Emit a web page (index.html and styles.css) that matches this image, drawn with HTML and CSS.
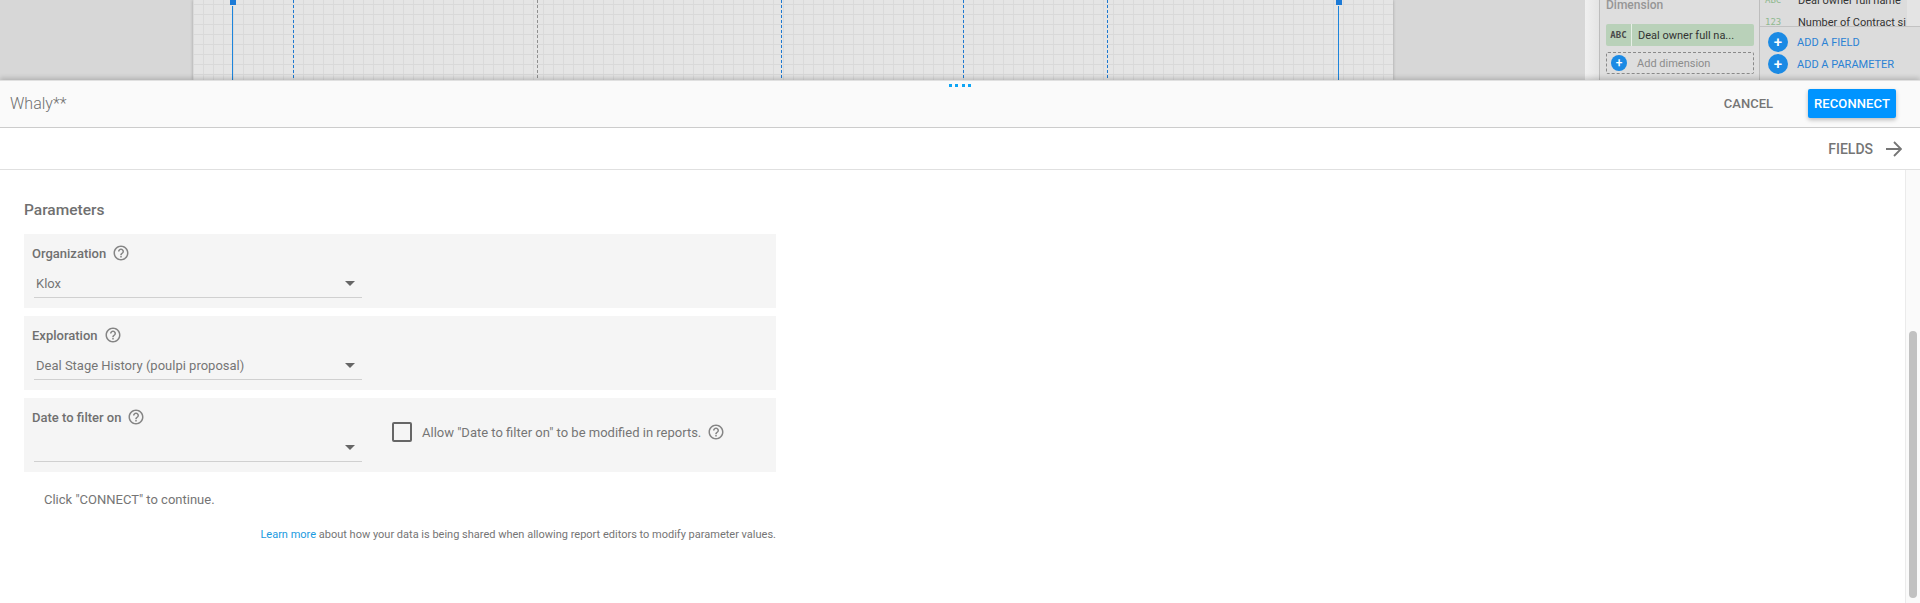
FILE: index.html
```html
<!DOCTYPE html>
<html lang="en">
<head>
    <meta charset="UTF-8">
    <meta name="viewport" content="width=device-width, initial-scale=1.0">
    <title>Whaly**</title>
    <link rel="stylesheet" href="styles.css">
</head>
<body>

<svg class="defs" width="0" height="0">
    <symbol id="help" viewBox="0 0 24 24">
        <path d="M11 18h2v-2h-2v2zm1-16C6.48 2 2 6.48 2 12s4.48 10 10 10 10-4.48 10-10S17.52 2 12 2zm0 18c-4.41 0-8-3.59-8-8s3.59-8 8-8 8 3.59 8 8-3.59 8-8 8zm0-14c-2.21 0-4 1.79-4 4h2c0-1.1.9-2 2-2s2 .9 2 2c0 2-3 1.75-3 5h2c0-2.25 3-2.5 3-5 0-2.21-1.79-4-4-4z"/>
    </symbol>
</svg>

<div class="backdrop">
    <div class="gutter-left"></div>
    <div class="canvas">
        <span class="guide guide-solid guide-a"></span>
        <span class="guide guide-dash guide-b"></span>
        <span class="guide guide-grey guide-c"></span>
        <span class="guide guide-dash guide-d"></span>
        <span class="guide guide-dash guide-e"></span>
        <span class="guide guide-dash guide-f"></span>
        <span class="guide guide-solid guide-g"></span>
    </div>
    <div class="gutter-right"></div>
    <div class="gap"></div>
    <div class="data-col">
        <div class="dim-label">Dimension</div>
        <div class="chip">
            <span class="chip-type">ABC</span>
            <span class="chip-name">Deal owner full na...</span>
        </div>
        <div class="add-dim">
            <span class="plus plus-small">+</span>
            <span class="add-dim-text">Add dimension</span>
        </div>
    </div>
    <div class="fields-col">
        <div class="fields-list">
            <div class="field-row"><span class="field-type">ABC</span>Deal owner full name</div>
            <div class="field-row"><span class="field-type">123</span>Number of Contract si</div>
        </div>
        <div class="add-row"><span class="plus">+</span>ADD A FIELD</div>
        <div class="add-row"><span class="plus">+</span>ADD A PARAMETER</div>
    </div>
</div>

<div class="panel">
    <div class="dots"><i></i><i></i><i></i><i></i></div>
    <header class="header">
        <div class="title">Whaly**</div>
        <button class="btn-cancel">CANCEL</button>
        <button class="btn-reconnect">RECONNECT</button>
    </header>
    <div class="toolbar">
        <span class="fields-link">FIELDS</span>
        <svg class="arrow" width="16" height="16" viewBox="0 0 16 16">
            <path d="M0 8h15M8 1l7 7-7 7"/>
        </svg>
    </div>
    <div class="content">
        <div class="form">
            <h2 class="form-title">Parameters</h2>

            <section class="card">
                <div class="card-main">
                    <div class="card-label">Organization <svg class="help"><use href="#help"/></svg></div>
                    <div class="select"><span>Klox</span><i class="caret"></i></div>
                </div>
            </section>

            <section class="card">
                <div class="card-main">
                    <div class="card-label">Exploration <svg class="help"><use href="#help"/></svg></div>
                    <div class="select"><span>Deal Stage History (poulpi proposal)</span><i class="caret"></i></div>
                </div>
            </section>

            <section class="card">
                <div class="card-main">
                    <div class="card-label">Date to filter on <svg class="help"><use href="#help"/></svg></div>
                    <div class="select"><span></span><i class="caret"></i></div>
                </div>
                <label class="allow">
                    <span class="checkbox"></span>
                    <span>Allow "Date to filter on" to be modified in reports.</span>
                    <svg class="help"><use href="#help"/></svg>
                </label>
            </section>

            <p class="hint">Click "CONNECT" to continue.</p>
            <p class="note"><a href="#">Learn more</a> about how your data is being shared when allowing report editors to modify parameter values.</p>
        </div>
        <div class="scrollbar"><div class="thumb"></div></div>
    </div>
</div>

</body>
</html>
```

FILE: styles.css
```css
* {
    box-sizing: border-box;
}
body {
    margin: 0;
    height: 603px;
    overflow: hidden;
    display: flex;
    flex-direction: column;
    background: #fff;
    font-family: Roboto, sans-serif;
    color: #757575;
}
.defs {
    position: absolute;
}

/* dimmed report editor behind the panel */
.backdrop {
    height: 80px;
    flex: none;
    display: flex;
    overflow: hidden;
    background: #d7d7d7;
}
.gutter-left {
    width: 193px;
}
.canvas {
    width: 1200px;
    position: relative;
    background-color: #e5e5e5;
    background-image:
        linear-gradient(#d9d9d9 1px, transparent 1px),
        linear-gradient(90deg, #dadada 1px, transparent 1px);
    background-size: 10px 10px;
    background-position: 0 4px;
    box-shadow: 0 0 3px rgba(0, 0, 0, 0.25);
}
.guide {
    position: absolute;
    top: 0;
    bottom: 0;
    width: 1px;
}
.guide-solid {
    background: #1c84dc;
}
.guide-solid::before {
    content: "";
    position: absolute;
    left: -2px;
    top: 0;
    width: 6px;
    height: 5px;
    background: #1c7ad6;
    box-shadow: 0 1px 0 #e5e5e5;
}
.guide-dash {
    background: repeating-linear-gradient(#1c78d0 0 3px, transparent 3px 5px);
}
.guide-grey {
    background: repeating-linear-gradient(#8f8f8f 0 3px, transparent 3px 5px);
}
.guide-a { left: 39px; }
.guide-b { left: 100px; }
.guide-c { left: 344px; }
.guide-d { left: 588px; }
.guide-e { left: 770px; }
.guide-f { left: 914px; }
.guide-g { left: 1145px; }
.gutter-right {
    width: 192px;
}
.gap {
    width: 14px;
    background: linear-gradient(90deg, #f0f0f0, #e4e4e4);
}
.data-col {
    width: 161px;
    padding: 0 5px 0 6px;
    background: #dedede;
    border-left: 1px solid #bdbdbd;
    border-right: 1px solid #bdbdbd;
}
.dim-label {
    height: 10px;
    line-height: 10px;
    font-size: 12px;
    font-weight: 500;
    color: #969696;
}
.chip {
    margin-top: 14px;
    height: 22px;
    display: flex;
    align-items: center;
    background: #b9d1b9;
    border-radius: 2px;
    font-size: 11px;
    color: #333;
}
.chip-type {
    width: 26px;
    height: 22px;
    line-height: 22px;
    text-align: center;
    border-right: 1px solid #e6efe6;
    font-family: "DejaVu Sans Mono", monospace;
    font-size: 9px;
    font-weight: bold;
    color: #4a4a4a;
}
.chip-name {
    margin-left: 6px;
}
.add-dim {
    margin-top: 6px;
    height: 22px;
    display: flex;
    align-items: center;
    padding-left: 4px;
    border: 1px dashed #8a8a8a;
    border-radius: 2px;
    font-size: 11px;
    color: #8c8c8c;
}
.add-dim-text {
    margin-left: 10px;
}
.plus {
    flex: none;
    width: 20px;
    height: 20px;
    margin-right: 9px;
    border-radius: 50%;
    background: #1b8ae4;
    color: #fff;
    font-size: 15px;
    font-weight: 500;
    line-height: 20px;
    text-align: center;
}
.plus.plus-small {
    width: 16px;
    height: 16px;
    margin: 0;
    font-size: 12px;
    line-height: 16px;
}
.fields-col {
    flex: 1;
    background: #dcdcdc;
}
.fields-list {
    height: 27px;
    overflow: hidden;
    border-bottom: 1px solid #c2c2c2;
    background: linear-gradient(90deg, transparent 147px, #e4e4e4 147px);
}
.field-row {
    height: 22px;
    display: flex;
    align-items: center;
    font-size: 11px;
    color: #333;
    white-space: nowrap;
    width: 147px;
    overflow: hidden;
}
.field-row:first-child {
    margin-top: -11px;
}
.field-type {
    flex: none;
    width: 38px;
    padding-left: 5px;
    font-family: "DejaVu Sans Mono", monospace;
    font-size: 9px;
    color: #8fb98f;
}
.add-row {
    height: 22px;
    padding-left: 8px;
    display: flex;
    align-items: center;
    font-size: 11px;
    color: #2b82d4;
}
.fields-list + .add-row {
    margin-top: 4px;
}

/* connector panel */
.panel {
    flex: 1;
    position: relative;
    display: flex;
    flex-direction: column;
    min-height: 0;
    box-shadow: 0 -2px 5px rgba(0, 0, 0, 0.18);
}
.dots {
    position: absolute;
    top: 4px;
    left: 949px;
    display: flex;
    gap: 3.3px;
}
.dots i {
    width: 3px;
    height: 3px;
    background: #0ea5f5;
}
.header {
    height: 48px;
    flex: none;
    display: flex;
    align-items: center;
    padding: 0 24px 1px 10px;
    background: #fafafa;
    border-top: 1px solid #e0e0e0;
    border-bottom: 1px solid #cccccc;
}
.title {
    flex: 1;
    font-size: 16px;
    font-weight: 300;
    color: #707070;
}
button {
    border: none;
    background: none;
    padding: 0;
    font-family: Roboto, sans-serif;
    font-size: 13px;
    font-weight: 500;
}
.btn-cancel {
    margin-right: 35px;
    color: #757575;
}
.btn-reconnect {
    width: 88px;
    height: 29px;
    border-radius: 2px;
    background: #0094ff;
    color: #fff;
    letter-spacing: 0.1px;
    box-shadow: 0 2px 4px rgba(0, 0, 0, 0.25);
}
.toolbar {
    height: 42px;
    flex: none;
    display: flex;
    align-items: center;
    justify-content: flex-end;
    padding-right: 18px;
    border-bottom: 1px solid #e0e0e0;
    font-size: 14px;
    font-weight: 500;
}
.arrow {
    margin-left: 13px;
}
.arrow path {
    fill: none;
    stroke: #757575;
    stroke-width: 1.8;
}
.content {
    flex: 1;
    min-height: 0;
    display: flex;
    justify-content: space-between;
}
.form {
    width: 752px;
    margin-left: 24px;
}
.form-title {
    margin: 32px 0 16px;
    height: 16px;
    line-height: 16px;
    font-size: 15.5px;
    font-weight: 500;
    color: #707070;
}
.card {
    height: 74px;
    margin-bottom: 8px;
    padding: 10px 8px 0;
    display: flex;
    background: #f5f5f5;
}
.card-main {
    width: 330px;
}
.card-label {
    height: 18px;
    display: flex;
    align-items: center;
    font-size: 13px;
    font-weight: 500;
    color: #707070;
}
.help {
    width: 18px;
    height: 18px;
    margin-left: 6px;
    fill: #858585;
}
.select {
    margin: 7px 0 0 2px;
    width: 328px;
    height: 29px;
    padding: 0 7px 0 2px;
    display: flex;
    align-items: center;
    justify-content: space-between;
    border-bottom: 1px solid #d0d0d0;
    font-size: 13px;
    color: #757575;
}
.caret {
    width: 0;
    height: 0;
    border-left: 5px solid transparent;
    border-right: 5px solid transparent;
    border-top: 5px solid #666;
}
.allow {
    margin: 14px 0 0 30px;
    height: 20px;
    display: flex;
    align-items: center;
    font-size: 13px;
    color: #757575;
}
.checkbox {
    width: 20px;
    height: 20px;
    margin-right: 10px;
    border: 2px solid #666;
    border-radius: 2px;
}
.hint {
    margin: 20px 0 0 20px;
    font-size: 13px;
    line-height: 16px;
    color: #757575;
}
.note {
    margin: 20px 0 0;
    font-size: 11px;
    line-height: 14px;
    text-align: right;
    color: #757575;
}
.note a {
    color: #1a9ae0;
    text-decoration: none;
}
.scrollbar {
    width: 15px;
    position: relative;
    background: #fafafa;
    border-left: 1px solid #ebebeb;
}
.thumb {
    position: absolute;
    left: 3px;
    right: 3px;
    top: 161px;
    bottom: 5px;
    border-radius: 4px;
    background: #c1c1c1;
}
```
